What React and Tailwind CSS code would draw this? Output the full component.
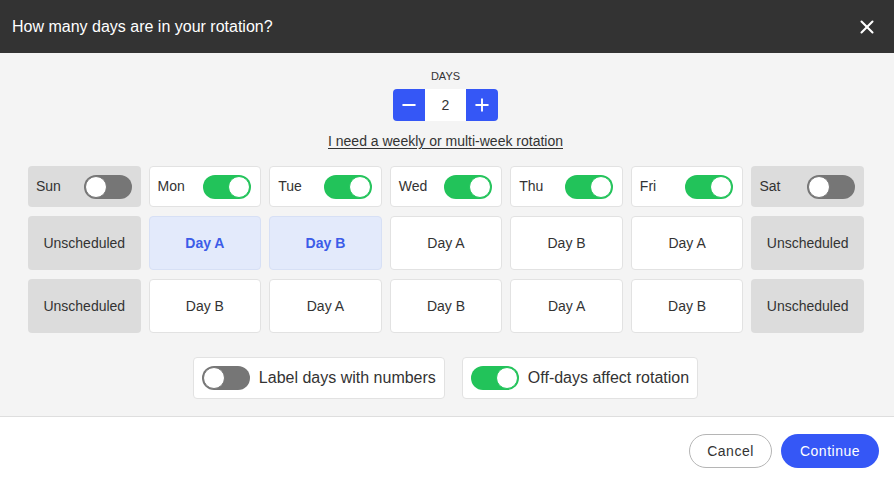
import { X, Minus, Plus } from 'lucide-react';

const days = [
    { label: 'Sun', on: false, a: 'Unscheduled', b: 'Unscheduled' },
    { label: 'Mon', on: true, a: 'Day A', b: 'Day B', sel: true },
    { label: 'Tue', on: true, a: 'Day B', b: 'Day A', sel: true },
    { label: 'Wed', on: true, a: 'Day A', b: 'Day B' },
    { label: 'Thu', on: true, a: 'Day B', b: 'Day A' },
    { label: 'Fri', on: true, a: 'Day A', b: 'Day B' },
    { label: 'Sat', on: false, a: 'Unscheduled', b: 'Unscheduled' },
];

const Toggle = ({ on }) => (
    <div
        className={`relative w-[48px] h-[24px] rounded-full shrink-0 ${on ? 'bg-[#22c35a]' : 'bg-[#767676]'}`}
    >
        <div
            className={`absolute top-[1px] w-[22px] h-[22px] rounded-full bg-white border ${on ? 'right-[1px] border-[#22c35a]' : 'left-[1px] border-[#767676]'}`}
        />
    </div>
);

const Cell = ({ text, off, sel }) => (
    <div
        className={`h-[54px] rounded-[4px] flex items-center justify-center text-[14px] ${off
                ? 'bg-[#dcdcdc] text-[#333]'
                : sel
                    ? 'bg-[#e3eafb] border border-[#d7e0f5] text-[#3c5ce8] font-bold'
                    : 'bg-white border border-[#e2e2e2] text-[#333]'
            }`}
    >
        {text}
    </div>
);

export default function App() {
    return (
        <div className="w-[894px] h-[483px] flex flex-col bg-white text-[#333]" style={{ fontFamily: '"Liberation Sans", Arial, sans-serif' }}>
            <div className="h-[53px] bg-[#333333] flex items-center justify-between pl-[12px] pr-[16px] shrink-0">
                <span className="text-white text-[16px]">How many days are in your rotation?</span>
                <X size={22} strokeWidth={2.25} className="text-white" />
            </div>

            <div className="h-[364px] bg-[#f4f4f4] border-b border-[#dedede] flex flex-col items-center pt-[17px]">
                <div className="text-[11px] text-[#333] leading-[12px] mr-[3px]">DAYS</div>
                <div className="flex mt-[7px] h-[32px] mr-[3px]">
                    <div className="w-[32px] bg-[#3557f6] rounded-l-[4px] flex items-center justify-center text-white">
                        <Minus size={20} strokeWidth={2.25} />
                    </div>
                    <div className="w-[41px] bg-white flex items-center justify-center text-[14px]">2</div>
                    <div className="w-[32px] bg-[#3557f6] rounded-r-[4px] flex items-center justify-center text-white">
                        <Plus size={20} strokeWidth={2.25} />
                    </div>
                </div>
                <div className="mt-[10px] text-[14px] underline underline-offset-2 text-[#333] mr-[3px]">I need a weekly or multi-week rotation</div>

                <div className="w-[836px] grid grid-cols-7 gap-x-[8px] gap-y-[9px] mt-[14px] mr-[2px]">
                    {days.map((d) => (
                        <div
                            key={d.label}
                            className={`h-[41px] rounded-[4px] flex items-center justify-between pl-[8px] pr-[9px] text-[14px] ${d.on ? 'bg-white border border-[#e2e2e2]' : 'bg-[#dcdcdc]'}`}
                        >
                            <span>{d.label}</span>
                            <Toggle on={d.on} />
                        </div>
                    ))}
                    {days.map((d) => (
                        <Cell key={'a' + d.label} text={d.a} off={!d.on} sel={d.sel} />
                    ))}
                    {days.map((d) => (
                        <Cell key={'b' + d.label} text={d.b} off={!d.on} />
                    ))}
                </div>

                <div className="flex gap-[17px] mt-[24px] mr-[3px]">
                    <div className="h-[42px] bg-white border border-[#e2e2e2] rounded-[4px] flex items-center gap-[9px] pl-[8px] pr-[8px] text-[16px]">
                        <Toggle on={false} />
                        <span>Label days with numbers</span>
                    </div>
                    <div className="h-[42px] bg-white border border-[#e2e2e2] rounded-[4px] flex items-center gap-[9px] pl-[8px] pr-[8px] text-[16px]">
                        <Toggle on={true} />
                        <span>Off-days affect rotation</span>
                    </div>
                </div>
            </div>

            <div className="flex-1 flex items-center justify-end gap-[9px] pr-[15px] pt-[2px]">
                <button className="h-[34px] w-[83px] rounded-full border border-[#b5b5b5] bg-white text-[14px] tracking-[0.5px] text-[#333]">Cancel</button>
                <button className="h-[34px] w-[98px] rounded-full bg-[#3557f6] text-white text-[14px] tracking-[0.5px]">Continue</button>
            </div>
        </div>
    );
}
